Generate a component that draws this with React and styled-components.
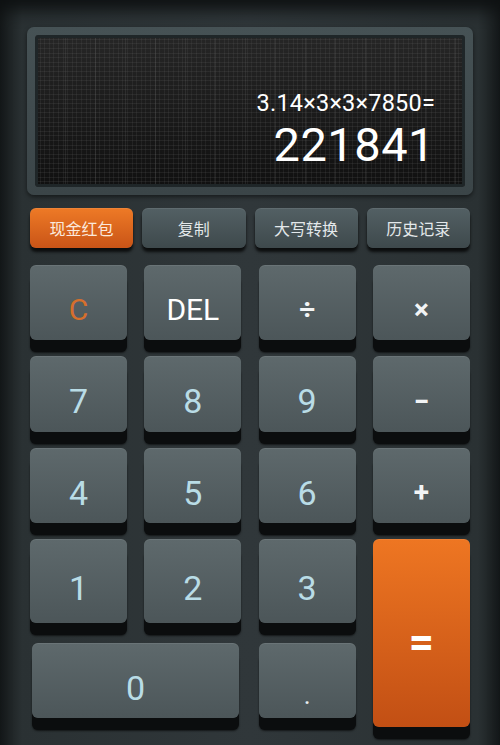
import React from "react";
import styled, { createGlobalStyle, css } from "styled-components";

const GlobalStyle = createGlobalStyle`
  html, body {
    margin: 0;
    padding: 0;
    background: #1b2022;
  }
  #root {
    width: 500px;
    height: 745px;
  }
`;

const fnKeys = [
  { label: "现金红包", accent: true },
  { label: "复制" },
  { label: "大写转换" },
  { label: "历史记录" },
];

const keys = [
  { label: "C", kind: "clear" },
  { label: "DEL", kind: "del" },
  { label: "÷", kind: "op" },
  { label: "×", kind: "op" },
  { label: "7" },
  { label: "8" },
  { label: "9" },
  { label: "−", kind: "op" },
  { label: "4" },
  { label: "5" },
  { label: "6" },
  { label: "+", kind: "op" },
  { label: "1" },
  { label: "2" },
  { label: "3" },
  { label: "=", kind: "equals" },
  { label: "0", kind: "zero" },
  { label: ".", kind: "dot" },
];

const App = () => {
  return (
    <Page>
      <GlobalStyle />
      <DisplayFrame>
        <Screen>
          <Expression>3.14×3×3×7850=</Expression>
          <Result>221841</Result>
        </Screen>
      </DisplayFrame>

      <FnRow>
        {fnKeys.map((k) => (
          <FnButton key={k.label} $accent={k.accent}>
            {k.label}
          </FnButton>
        ))}
      </FnRow>

      <Keypad>
        {keys.map((k) => (
          <Key key={k.label} $kind={k.kind}>
            {k.label}
          </Key>
        ))}
      </Keypad>
    </Page>
  );
};

const Page = styled.div`
  width: 500px;
  height: 745px;
  box-sizing: border-box;
  padding: 27px 30px 0;
  overflow: hidden;
  background: linear-gradient(
    90deg,
    #15191a 0px,
    #2a3133 22px,
    #30373a 50%,
    #2a3133 478px,
    #15191a 500px
  );
  box-shadow: inset 0 16px 16px -6px #0e1112;
  font-family: Roboto, "Noto Sans CJK SC", sans-serif;
`;

const DisplayFrame = styled.div`
  height: 168px;
  margin: 0 -3px;
  box-sizing: border-box;
  padding: 8px;
  border-radius: 7px;
  background: linear-gradient(180deg, #465255 0%, #3b4548 100%);
  box-shadow: 0 2px 4px rgba(0, 0, 0, 0.5);
`;

const Screen = styled.div`
  height: 100%;
  box-sizing: border-box;
  border-radius: 3px;
  padding: 54px 30px 0 0;
  display: flex;
  flex-direction: column;
  align-items: flex-end;
  color: #ffffff;
  background-color: #151515;
  background-image:
    repeating-linear-gradient(
      90deg,
      rgba(120, 120, 120, 0.18) 0 1px,
      transparent 1px 30px
    ),
    repeating-linear-gradient(
      0deg,
      rgba(110, 110, 110, 0.16) 0 1px,
      transparent 1px 4.6px
    ),
    repeating-linear-gradient(
      90deg,
      rgba(110, 110, 110, 0.14) 0 1px,
      transparent 1px 4.6px
    ),
    linear-gradient(180deg, #262626 0%, #101010 100%);
  box-shadow: inset 0 0 0 3px #1f2628;
`;

const Expression = styled.div`
  font-size: 23.5px;
  line-height: 28px;
  letter-spacing: 0.2px;
`;

const Result = styled.div`
  margin-top: 1px;
  font-size: 47px;
  line-height: 54px;
  letter-spacing: 0.5px;
`;

const FnRow = styled.div`
  margin-top: 13px;
  display: grid;
  grid-template-columns: repeat(4, 1fr);
  column-gap: 9px;
`;

const FnButton = styled.div`
  height: 40px;
  border-radius: 6px;
  display: flex;
  align-items: center;
  justify-content: center;
  font-size: 16px;
  color: #e3e8ea;
  font-family: "Noto Sans CJK SC", sans-serif;
  background: linear-gradient(180deg, #536064 0%, #3e494c 100%);
  box-shadow: 0 4px 3px rgba(0, 0, 0, 0.75), inset 0 1px 0 rgba(255, 255, 255, 0.08);

  ${(p) =>
    p.$accent &&
    css`
      color: #fbe9dc;
      background: linear-gradient(180deg, #ee7a26 0%, #c95417 100%);
    `}
`;

const Keypad = styled.div`
  margin-top: 17px;
  display: grid;
  grid-template-columns: repeat(4, 97px);
  grid-template-rows: 75px 76px 75px 84px 79px;
  column-gap: 17.33px;
  row-gap: 16px;
`;

const Key = styled.div`
  border-radius: 6px;
  box-sizing: border-box;
  padding-top: 14px;
  display: flex;
  align-items: center;
  justify-content: center;
  font-size: 34px;
  color: #b9dce6;
  background: linear-gradient(180deg, #5e696c 0%, #4c5659 100%);
  box-shadow:
    0 12px 0 #0b0d0e,
    0 13px 2px rgba(0, 0, 0, 0.6),
    inset 0 1px 0 rgba(255, 255, 255, 0.08);

  ${(p) =>
    p.$kind === "clear" &&
    css`
      color: #d66f2c;
      font-size: 30px;
    `}

  ${(p) =>
    p.$kind === "del" &&
    css`
      color: #ffffff;
      font-size: 30px;
    `}

  ${(p) =>
    p.$kind === "op" &&
    css`
      color: #f2f4f5;
      font-size: 28px;
      font-weight: 700;
    `}

  ${(p) =>
    p.$kind === "equals" &&
    css`
      grid-column: 4;
      grid-row: 4 / span 2;
      align-self: start;
      height: calc(100% + 9px);
      padding-top: 18px;
      color: #ffffff;
      font-size: 44px;
      font-weight: 700;
      background: linear-gradient(180deg, #ee7622 0%, #c24f14 100%);
    `}

  ${(p) =>
    p.$kind === "zero" &&
    css`
      grid-column: 1 / span 2;
      margin: 4px 2px 0;
    `}

  ${(p) =>
    p.$kind === "dot" &&
    css`
      margin-top: 4px;
      color: #e8eef0;
      font-size: 26px;
      padding-top: 28px;
    `}
`;

export default App;
